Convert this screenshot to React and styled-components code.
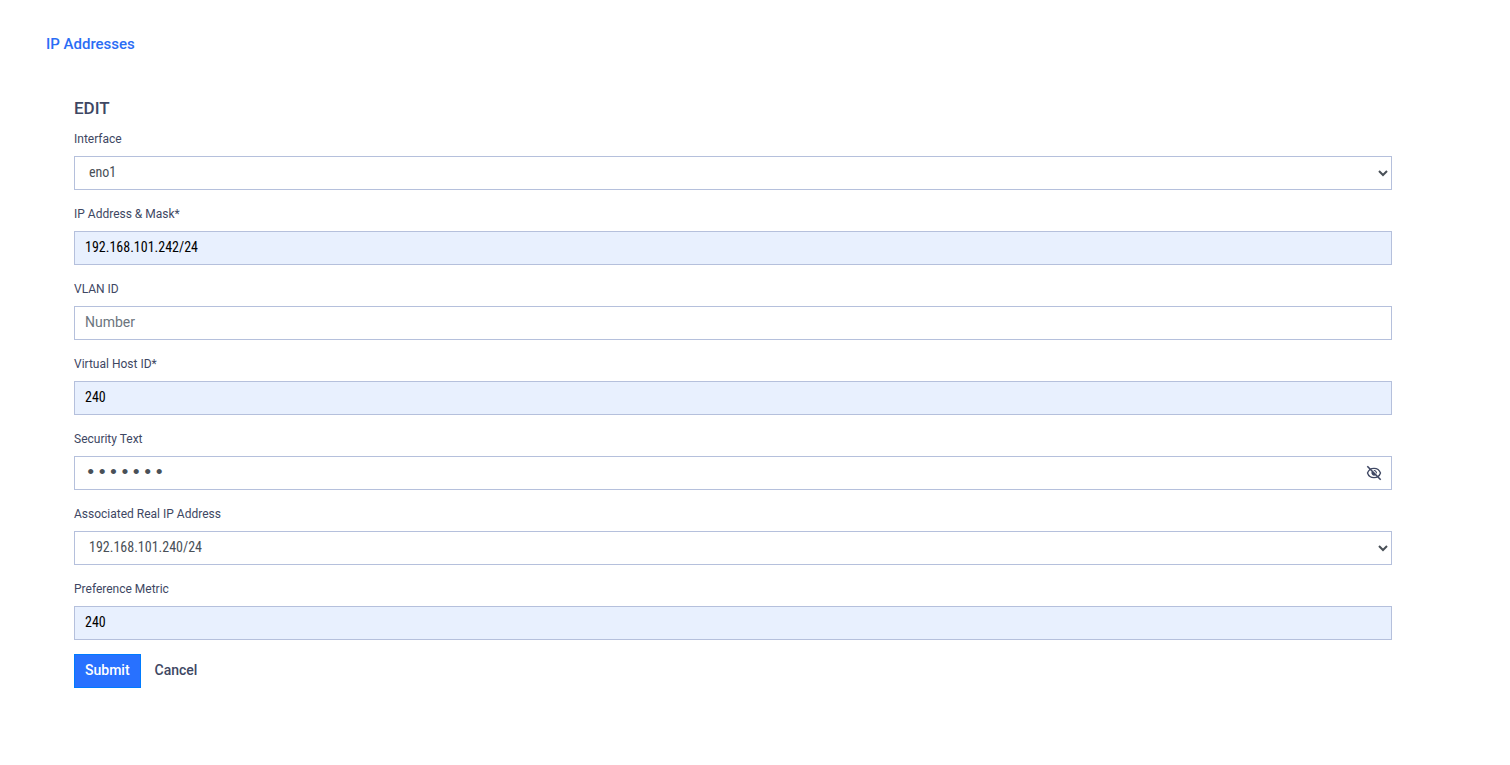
import { useState } from 'react';
import styled, { createGlobalStyle } from 'styled-components';

const GlobalStyle = createGlobalStyle`
  *, *::before, *::after {
    box-sizing: border-box;
  }

  body {
    margin: 0;
    background-color: #fff;
    color: #3e4763;
    font-family: Roboto, 'Liberation Sans', sans-serif;
    font-size: 14px;
  }
`;

const Page = styled.main`
  padding: 32px 118px 76px 46px;
`;

const PageLink = styled.a`
  color: #2a6df5;
  font-size: 15px;
  font-weight: 500;
  line-height: 24px;
  text-decoration: none;
`;

const Form = styled.form`
  display: flex;
  flex-direction: column;
  padding: 38px 0 0 28px;
`;

const FormTitle = styled.h1`
  margin: 0 0 7px;
  font-size: 17px;
  font-weight: 500;
  line-height: 28px;
`;

const Field = styled.div`
  display: flex;
  flex-direction: column;
  margin-bottom: 14px;
`;

const Label = styled.label`
  margin-bottom: 7px;
  font-size: 12px;
  line-height: 20px;
`;

const Input = styled.input`
  width: 100%;
  height: 34px;
  padding: 0 10px 2px;
  border: 1px solid #b5c0dc;
  border-radius: 0;
  outline: none;
  background-color: ${(props) => (props.$filled ? '#e8f0fe' : '#fff')};
  color: ${(props) => (props.$filled ? '#000' : '#495057')};
  font-family: 'Roboto Condensed', Roboto, sans-serif;
  font-size: 14px;

  &::placeholder {
    color: #6c757d;
    font-family: Roboto, sans-serif;
    opacity: 1;
  }
`;

const Select = styled.select`
  width: 100%;
  height: 34px;
  padding: 0 10px 2px;
  border: 1px solid #b5c0dc;
  border-radius: 0;
  outline: none;
  background-color: #fff;
  color: #495057;
  font-family: 'Roboto Condensed', Roboto, sans-serif;
  font-size: 14px;
`;

const PasswordBox = styled.div`
  display: flex;
  align-items: center;
  height: 34px;
  padding-right: 9px;
  border: 1px solid #b5c0dc;
`;

const PasswordInput = styled.input`
  flex: 1;
  min-width: 0;
  padding: 0 10px;
  border: 0;
  outline: none;
  background: transparent;
  color: #495057;
  font-family: ${(props) => (props.type === 'password' ? "'Liberation Mono', monospace" : 'inherit')};
  font-size: ${(props) => (props.type === 'password' ? '19px' : '14px')};
`;

const EyeButton = styled.button`
  display: flex;
  padding: 0;
  border: 0;
  background: transparent;
  color: #3e4763;
  cursor: pointer;
`;

const Actions = styled.div`
  display: flex;
`;

const Button = styled.button`
  height: 34px;
  padding: 0 10px 2px;
  border: 1px solid ${(props) => (props.$primary ? '#007bff' : 'transparent')};
  background-color: ${(props) => (props.$primary ? '#2871ff' : 'transparent')};
  color: ${(props) => (props.$primary ? '#fff' : '#3e4763')};
  font-family: inherit;
  font-size: 14px;
  font-weight: 500;
  cursor: pointer;

  & + & {
    margin-left: 3px;
  }
`;

const EyeOffIcon = () => (
  <svg width='16' height='16' viewBox='0 0 16 16' fill='none' stroke='currentColor' aria-hidden='true'>
    <path d='M1.5 8C2.5 5 5.2 3.3 8 3.3S13.5 5 14.5 8C13.5 11 10.8 12.7 8 12.7S2.5 11 1.5 8Z' strokeWidth='1.3' />
    <path d='M6 6.2A2.7 2.7 0 0 0 9.8 10Z' fill='currentColor' stroke='none' />
    <path d='M7.8 5.6A2.3 2.3 0 0 1 10.4 8.3' strokeWidth='1.1' />
    <path d='M1.3 1.3L14.7 14.7' strokeWidth='1.6' />
  </svg>
);

const App = () => {
  const [showText, setShowText] = useState(false);

  return (
    <>
      <GlobalStyle />
      <Page>
        <PageLink href='#ip-addresses'>IP Addresses</PageLink>
        <Form onSubmit={(e) => e.preventDefault()}>
          <FormTitle>EDIT</FormTitle>
          <Field>
            <Label htmlFor='interface'>Interface</Label>
            <Select id='interface' defaultValue='eno1'>
              <option>eno1</option>
            </Select>
          </Field>
          <Field>
            <Label htmlFor='address'>IP Address &amp; Mask*</Label>
            <Input id='address' $filled defaultValue='192.168.101.242/24' />
          </Field>
          <Field>
            <Label htmlFor='vlan'>VLAN ID</Label>
            <Input id='vlan' placeholder='Number' />
          </Field>
          <Field>
            <Label htmlFor='host'>Virtual Host ID*</Label>
            <Input id='host' $filled defaultValue='240' />
          </Field>
          <Field>
            <Label htmlFor='security'>Security Text</Label>
            <PasswordBox>
              <PasswordInput id='security' type={showText ? 'text' : 'password'} defaultValue='gateway' />
              <EyeButton type='button' aria-label='Toggle security text' onClick={() => setShowText(!showText)}>
                <EyeOffIcon />
              </EyeButton>
            </PasswordBox>
          </Field>
          <Field>
            <Label htmlFor='real-address'>Associated Real IP Address</Label>
            <Select id='real-address' defaultValue='192.168.101.240/24'>
              <option>192.168.101.240/24</option>
            </Select>
          </Field>
          <Field>
            <Label htmlFor='metric'>Preference Metric</Label>
            <Input id='metric' $filled defaultValue='240' />
          </Field>
          <Actions>
            <Button type='submit' $primary>Submit</Button>
            <Button type='button'>Cancel</Button>
          </Actions>
        </Form>
      </Page>
    </>
  );
};

export default App;
